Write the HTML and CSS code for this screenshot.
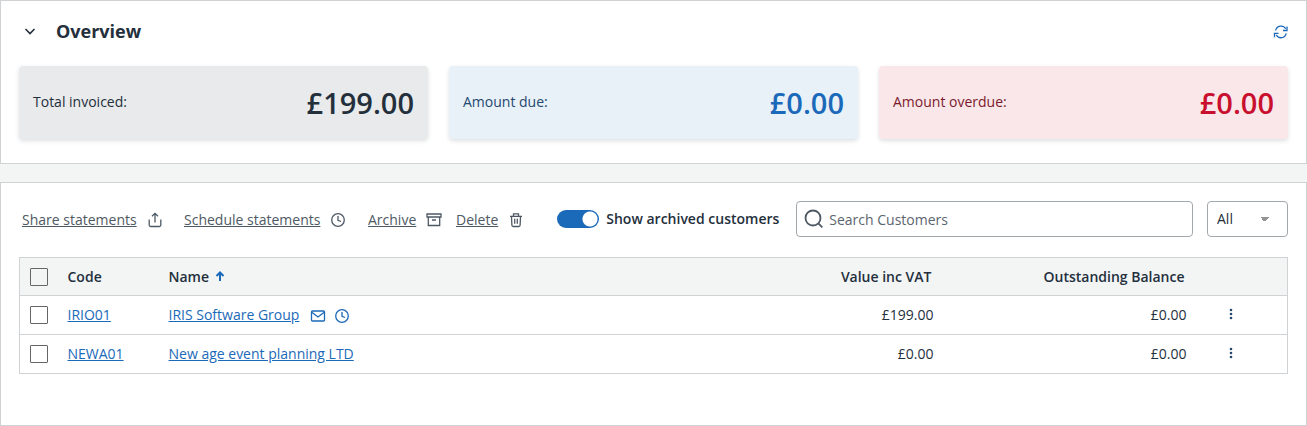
FILE: index.html
```html
<!DOCTYPE html>
<html lang="en">
<head>
    <meta charset="UTF-8">
    <meta name="viewport" content="width=device-width, initial-scale=1.0">
    <title>Customers</title>
    <link rel="stylesheet" href="styles.css">
</head>
<body>
    <section class="panel overview">
        <div class="overview-header">
            <button class="icon-button" type="button" aria-label="Collapse overview">
                <svg class="icon-chevron" width="22" height="16" viewBox="0 0 22 16"><path d="M6.500 6l4.500 4.500L15.500 6"/></svg>
            </button>
            <h2>Overview</h2>
            <button class="icon-button refresh" type="button" aria-label="Refresh">
                <svg width="16" height="16" viewBox="0 0 16 16"><path d="M3.700 7.500a5.400 5.400 0 0 1 10-1.700M15 3.500v4h-4M14.200 10.300a5.400 5.400 0 0 1-10 1.700M2.500 14.300v-4h4"/></svg>
            </button>
        </div>
        <div class="cards">
            <div class="card card-total">
                <span class="card-label">Total invoiced:</span>
                <span class="card-value">£199.00</span>
            </div>
            <div class="card card-due">
                <span class="card-label">Amount due:</span>
                <span class="card-value">£0.00</span>
            </div>
            <div class="card card-overdue">
                <span class="card-label">Amount overdue:</span>
                <span class="card-value">£0.00</span>
            </div>
        </div>
    </section>

    <section class="panel customers">
        <div class="toolbar">
            <div class="actions">
                <a class="action" href="#"><span>Share statements</span>
                    <svg width="16" height="16" viewBox="0 0 16 16"><path d="M8 10.500V1.500M5 4.300l3-3 3 3M2.200 7.500v5.500q0 1.500 1.500 1.500h8.600q1.500 0 1.500-1.500V7.500"/></svg>
                </a>
                <a class="action" href="#"><span>Schedule statements</span>
                    <svg width="16" height="16" viewBox="0 0 16 16"><circle cx="8" cy="8" r="6.300"/><path d="M8 4v4.300l3 1.200"/></svg>
                </a>
                <a class="action" href="#"><span>Archive</span>
                    <svg width="16" height="16" viewBox="0 0 16 16"><path d="M1 2h14v3H1zM2.300 5v8.500h11.400V5M6 8h4"/></svg>
                </a>
                <a class="action" href="#"><span>Delete</span>
                    <svg width="16" height="16" viewBox="0 0 16 16"><path d="M2 4.300h12M5.500 4V1.800h5V4M3.500 4.500l.4 8.800q.1 1.200 1.200 1.200h5.800q1.100 0 1.200-1.200l.4-8.800M6.700 6.800v5M9.300 6.800v5"/></svg>
                </a>
            </div>
            <label class="toggle">
                <input type="checkbox" checked>
                <span>Show archived customers</span>
            </label>
            <label class="search">
                <svg width="20" height="20" viewBox="0 0 20 20"><circle cx="9" cy="9" r="7.500"/><path d="M14.300 14.300l4 4"/></svg>
                <input type="text" placeholder="Search Customers" aria-label="Search Customers">
            </label>
            <select class="filter" aria-label="Filter customers">
                <option>All</option>
            </select>
        </div>

        <table class="customer-table">
            <thead>
                <tr>
                    <th class="col-check"><input type="checkbox" aria-label="Select all customers"></th>
                    <th class="col-code">Code</th>
                    <th class="col-name">Name <svg class="sort" width="10" height="12" viewBox="0 0 10 12"><path d="M5 11V3M1.500 6L5 2.500 8.500 6"/></svg></th>
                    <th class="col-value">Value inc VAT</th>
                    <th class="col-balance">Outstanding Balance</th>
                    <th class="col-menu"></th>
                </tr>
            </thead>
            <tbody>
                <tr>
                    <td class="col-check"><input type="checkbox" aria-label="Select IRIO01"></td>
                    <td><a href="#">IRIO01</a></td>
                    <td>
                        <div class="name">
                            <a href="#">IRIS Software Group</a>
                            <svg width="16" height="16" viewBox="0 0 16 16"><rect x="1.500" y="4" width="13" height="10" rx="1"/><path d="M1.800 5.200L8 10l6.200-4.800"/></svg>
                            <svg width="16" height="16" viewBox="0 0 16 16"><circle cx="8" cy="9" r="6.300"/><path d="M8 5v4.300l3 1.200"/></svg>
                        </div>
                    </td>
                    <td class="col-value">£199.00</td>
                    <td class="col-balance">£0.00</td>
                    <td class="col-menu">
                        <button class="icon-button" type="button" aria-label="More actions for IRIO01">
                            <svg class="dots" width="4" height="12" viewBox="0 0 4 12"><circle cx="2" cy="2" r="1.300"/><circle cx="2" cy="6" r="1.300"/><circle cx="2" cy="10" r="1.300"/></svg>
                        </button>
                    </td>
                </tr>
                <tr>
                    <td class="col-check"><input type="checkbox" aria-label="Select NEWA01"></td>
                    <td><a href="#">NEWA01</a></td>
                    <td><a href="#">New age event planning LTD</a></td>
                    <td class="col-value">£0.00</td>
                    <td class="col-balance">£0.00</td>
                    <td class="col-menu">
                        <button class="icon-button" type="button" aria-label="More actions for NEWA01">
                            <svg class="dots" width="4" height="12" viewBox="0 0 4 12"><circle cx="2" cy="2" r="1.300"/><circle cx="2" cy="6" r="1.300"/><circle cx="2" cy="10" r="1.300"/></svg>
                        </button>
                    </td>
                </tr>
            </tbody>
        </table>
    </section>
</body>
</html>
```
FILE: styles.css
```css
* {
    box-sizing: border-box;
}
body {
    margin: 0;
    min-height: 100vh;
    display: flex;
    flex-direction: column;
    gap: 18px;
    background-color: #f3f5f5;
    color: #242f3c;
    font-family: "Open Sans", sans-serif;
    font-size: 14px;
    line-height: 20px;
}
input, select, button {
    font: inherit;
    color: inherit;
}
svg {
    display: block;
    flex: none;
    fill: none;
    stroke: currentColor;
    stroke-width: 1.3;
}
.panel {
    background-color: #fff;
    border: 1px solid #d0d3d6;
    padding: 18px;
}
.icon-button {
    padding: 0;
    border: none;
    background: none;
    cursor: pointer;
}

/* overview */
.overview {
    padding-bottom: 24px;
}
.overview-header {
    display: flex;
    align-items: center;
    height: 24px;
    margin-bottom: 23px;
}
.overview-header h2 {
    margin: 0 0 0 15px;
    font-size: 18px;
    font-weight: 700;
}
.icon-chevron {
    stroke-width: 1.6;
}
.refresh {
    margin-left: auto;
    color: #1b69b9;
}
.cards {
    display: grid;
    grid-template-columns: repeat(3, 1fr);
    gap: 21px;
}
.card {
    display: flex;
    align-items: center;
    justify-content: space-between;
    height: 73px;
    padding: 0 14px;
    border-radius: 4px;
    box-shadow: 0 2px 4px rgba(36, 47, 60, 0.15);
}
.card-label {
    padding-bottom: 2px;
}
.card-value {
    font-size: 29px;
    font-weight: 600;
}
.card-total {
    background-color: #e8eaeb;
}
.card-due {
    background-color: #e8f0f8;
    color: #1b69b9;
}
.card-due .card-label {
    color: #24486e;
}
.card-overdue {
    background-color: #fae7e9;
    color: #c8102e;
}
.card-overdue .card-label {
    color: #7a1a2c;
}

/* customers */
.customers {
    flex: 1;
}
.toolbar {
    display: flex;
    align-items: center;
    margin-bottom: 20px;
}
.actions {
    display: grid;
    grid-template-columns: 162px 184px 88px auto;
    padding: 1px 0 0 3px;
}
.action {
    display: flex;
    align-items: center;
    gap: 10px;
    color: #4e5964;
    text-decoration: none;
}
.action span {
    text-decoration: underline;
}
.toggle {
    display: flex;
    align-items: center;
    gap: 7px;
    width: 239px;
    margin-left: 33px;
    font-weight: 600;
}
.toggle input {
    appearance: none;
    width: 42px;
    height: 18px;
    margin: 0;
    border-radius: 9px;
    background: radial-gradient(circle at 33px 9px, #fff 7px, #1b69b9 8px);
}
.search {
    display: flex;
    flex: 1;
    align-items: center;
    gap: 5px;
    height: 36px;
    padding: 0 7px;
    border: 1px solid #a3a8ad;
    border-radius: 4px;
    color: #4e5964;
}
.search svg {
    stroke-width: 1.8;
}
.search input {
    flex: 1;
    min-width: 0;
    padding: 2px 0 0;
    border: none;
    outline: none;
}
.search input::placeholder {
    color: #5b656f;
}
.filter {
    appearance: none;
    width: 81px;
    height: 36px;
    margin-left: 14px;
    padding: 0 9px;
    border: 1px solid #a3a8ad;
    border-radius: 4px;
    background: linear-gradient(to top right, transparent 50%, #949494 50%) 52px 15px / 5px 5px no-repeat,
                linear-gradient(to top left, transparent 50%, #949494 50%) 57px 15px / 5px 5px no-repeat #fff;
}

/* table */
.customer-table {
    width: 100%;
    border: 1px solid #d0d3d6;
    border-collapse: collapse;
    table-layout: fixed;
}
.customer-table tr {
    height: 39px;
    border-bottom: 1px solid #d0d3d6;
}
.customer-table thead tr {
    height: 38px;
}
.customer-table th,
.customer-table td {
    padding: 0;
    text-align: left;
}
.customer-table th {
    background-color: #f3f5f5;
    font-weight: 600;
}
.customer-table a {
    color: #1b69b9;
}
.customer-table input {
    appearance: none;
    display: block;
    width: 18px;
    height: 18px;
    margin: 0 0 0 10px;
    border: 1px solid #666;
    border-radius: 1px;
    background-color: #fff;
}
.customer-table thead input {
    background-color: transparent;
}
.col-check {
    width: 48px;
}
.col-code {
    width: 101px;
}
.customer-table .col-value {
    width: 253px;
    text-align: right;
}
.customer-table .col-balance {
    width: 253px;
    text-align: right;
}
.customer-table th.col-value,
.customer-table th.col-balance {
    padding-right: 2px;
}
.customer-table .col-menu {
    width: 101px;
    padding-left: 42px;
}
.name {
    display: flex;
    align-items: center;
    gap: 8px;
    color: #1b69b9;
}
.name a {
    margin-right: 3px;
}
.sort {
    display: inline-block;
    margin-left: 2px;
    color: #1b69b9;
    stroke-width: 2;
}
.dots {
    fill: #24486e;
    stroke: none;
}
```
